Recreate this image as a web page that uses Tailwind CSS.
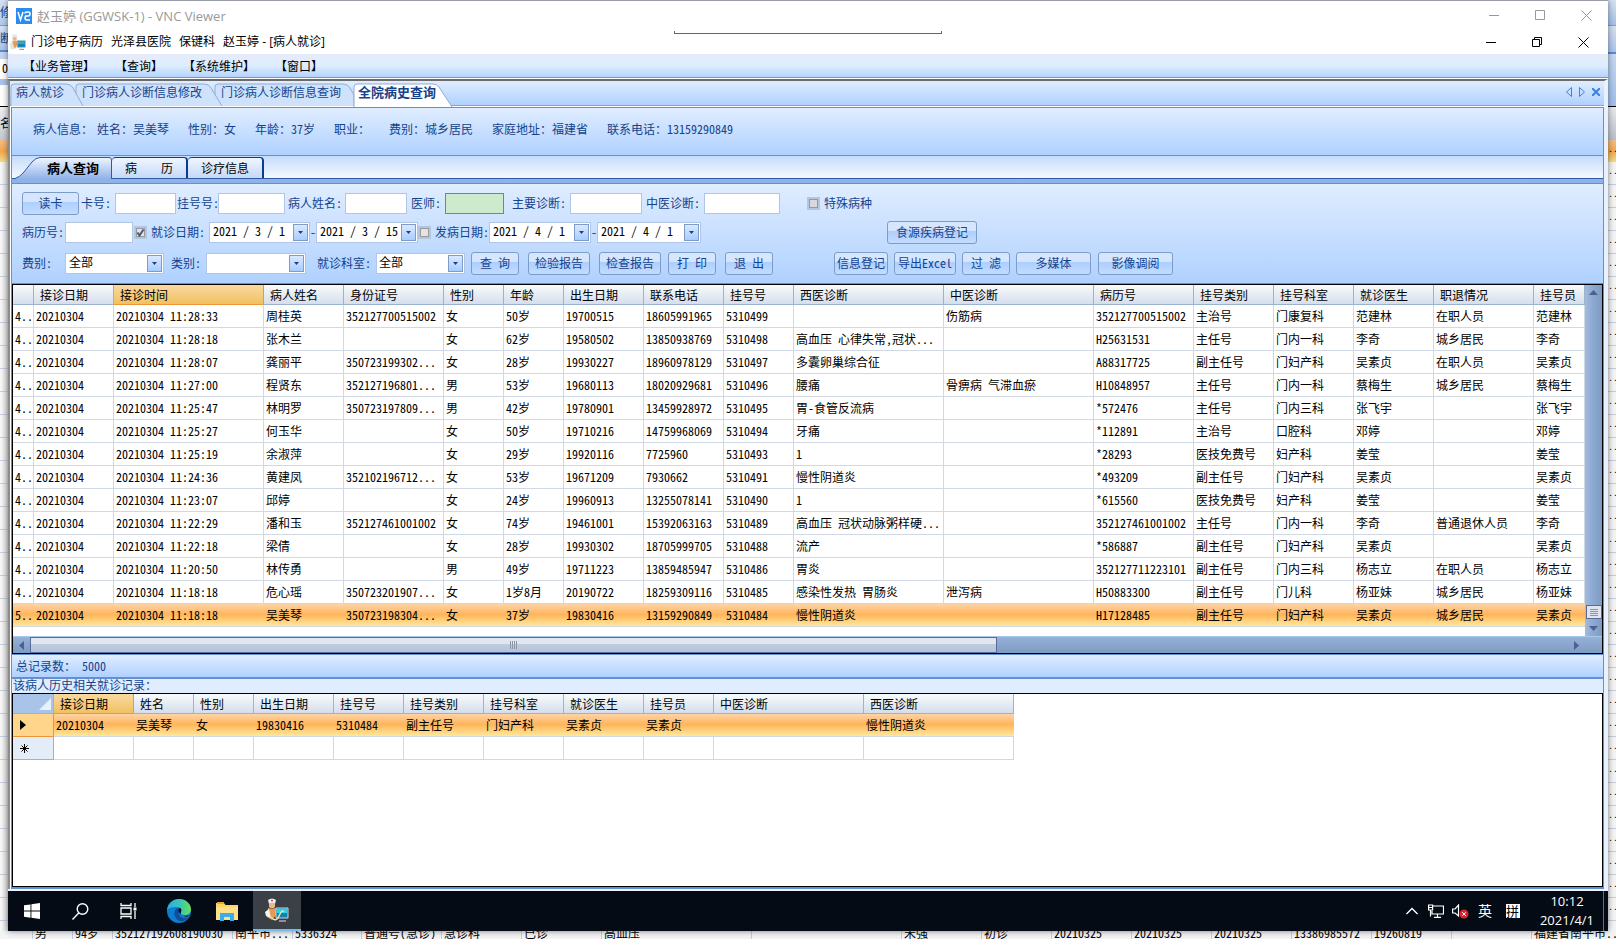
<!DOCTYPE html>
<html lang="zh-CN">
<head>
  <meta charset="UTF-8" />
  <meta name="viewport" content="width=device-width, initial-scale=1.0"/>
  <title>门诊电子病历</title>
  <script src="https://cdn.jsdelivr.net/npm/@tailwindcss/browser@4"></script>
</head>
<body class="h-screen flex flex-col overflow-hidden bg-[#f4f4f4] text-[12px] leading-4 text-black font-[family-name:'Noto_Sans_Mono_CJK_SC','Noto_Sans_CJK_SC',monospace]">

  <div class="flex grow min-h-0">
    <!-- window behind, left edge -->
    <div id="edgeLeft" class="w-2 shrink-0 overflow-hidden flex flex-col whitespace-nowrap text-[#15428b]">
      <div class="h-[26px] shrink-0 bg-linear-to-b from-[#d6e3f5] to-[#b4cbea] border-b border-[#8a9db8] pt-1">修</div>
      <div class="h-[26px] shrink-0 bg-linear-to-b from-[#d6e3f5] to-[#a9c4ea] border-b-2 border-[#5a8bcc] pt-1">断</div>
      <div class="h-[7px] shrink-0 bg-[#c3d6f0]"></div>
      <div class="h-5 shrink-0 bg-white text-black text-right pt-px">0</div>
      <div class="h-[6px] shrink-0 bg-[#a9c4ea]"></div>
      <div class="h-[21px] shrink-0 bg-white"></div>
      <div class="h-[34px] shrink-0 bg-linear-to-b from-[#eef0f2] to-[#c3c9d3] border-t border-black text-black pt-2">名</div>
      <div class="h-[22px] shrink-0 bg-linear-to-b from-[#f4bf87] via-[#f2a74d] to-[#f2dd88]"></div>
    </div>

    <div class="grow min-w-0 flex flex-col bg-white border-t border-[#979ca8] shadow-[0_0_6px_rgba(0,0,0,0.5)] z-10 relative">
      <!-- viewer title bar -->
      <header class="flex items-center h-[29px] pl-2 pr-4 text-[13px] text-[#999] font-[family-name:'Open_Sans','Noto_Sans_CJK_SC',sans-serif]">
        <svg class="size-4 mr-[5px]" viewBox="0 0 16 16"><rect width="16" height="16" fill="#2b8cf0"/><path d="M2 4l2.500 8L7 4M9 5.500Q9 4 11 4h1.500Q14 4 14 6T12 8h-1Q9 8 9 10t2 2h3M9 8h4" fill="none" stroke="#fff" stroke-width="1.500"/></svg>
        <h1 class="grow">赵玉婷 (GGWSK-1) - VNC Viewer</h1>
        <div class="flex items-center gap-[35px]">
          <button aria-label="最小化"><svg class="size-[11px]" viewBox="0 0 11 11" stroke="#999"><path d="M0 5.500h10"/></svg></button>
          <button aria-label="最大化"><svg class="size-[11px]" viewBox="0 0 11 11" stroke="#999" fill="none"><path d="M.5.5h9v9h-9z"/></svg></button>
          <button aria-label="关闭"><svg class="size-[11px]" viewBox="0 0 11 11" stroke="#999"><path d="M.5.5l10 10M10.500.5l-10 10"/></svg></button>
        </div>
      </header>
      <!-- collapsed viewer toolbar -->
      <div class="absolute left-[666px] top-[30px] w-[268px] h-[3px] border border-t-0 border-[#666]"></div>

      <!-- application title bar -->
      <div class="flex items-center gap-2 h-6 pl-[2px] pr-[19px] font-[family-name:'Open_Sans','Noto_Sans_CJK_SC',sans-serif]">
        <svg class="size-4 -mr-[3px]" viewBox="0 0 24 24"><path d="M3 2Q7-1 11 2L10 6H4z" fill="#e3e6ee"/><path d="M4 5h6v4Q7 12 4 9z" fill="#e8b88a"/><path d="M3 10l4 1 4-1 1 6-5 6-5-3z" fill="#e59a4c"/><path d="M0 14l4-3 2 9 4 3H1z" fill="#dfe4ea"/><path d="M11 10h12v10H11z" fill="#1380b8" stroke="#9fb8c8"/><path d="M12 11h10v4H12z" fill="#2fb0b0"/><path d="M14 23h7" stroke="#889" stroke-width="1.500"/></svg>
        <span>门诊电子病历</span>
        <span>光泽县医院</span>
        <span>保键科</span>
        <span class="grow">赵玉婷 - [病人就诊]</span>
        <div class="flex items-center gap-[35px]">
          <button aria-label="最小化"><svg class="size-[11px]" viewBox="0 0 11 11" stroke="#000"><path d="M0 5.500h10"/></svg></button>
          <button aria-label="还原"><svg class="size-[11px]" viewBox="0 0 11 11" stroke="#000" fill="none"><path d="M.5 2.500h7v7h-7zM2.500 2.500v-2h7v7h-2"/></svg></button>
          <button aria-label="关闭"><svg class="size-[11px]" viewBox="0 0 11 11" stroke="#000"><path d="M.5.5l10 10M10.500.5l-10 10"/></svg></button>
        </div>
      </div>

      <!-- menu -->
      <nav class="flex items-center h-6 pl-[15px] pt-px gap-5 bg-linear-to-b from-[#e6ebfa] via-[#deedff] to-[#b4d4ff] border-b border-[#6f9bd0]">
        <button>【业务管理】</button>
        <button>【查询】</button>
        <button>【系统维护】</button>
        <button>【窗口】</button>
      </nav>

      <div class="grow flex flex-col mt-px border-t-2 border-l-2 border-t-[#6b6b6b] border-l-[#8c8c8c] border-r-4 border-r-[#e8f1ff]">
        <!-- document tabs -->
        <div class="flex h-[25px] pt-[2px] bg-linear-to-b from-[#e0edff] to-[#afd1ff] border-b border-[#8ba3c7] text-[#15428b]">
          <button class="relative z-40 w-[65px] text-left pl-[6px] pb-1">
            <svg class="absolute left-0 top-0 -z-10 overflow-visible" width="65" height="23"><path d="M1 23V4Q1 1 4 1H56Q61 1 63 5L73 23" fill="#cfe2fc" stroke="#93add3"/></svg>病人就诊</button>
          <button class="relative z-30 w-[139px] text-left pl-[7px] pb-1">
            <svg class="absolute left-0 top-0 -z-10 overflow-visible" width="139" height="23"><path d="M1 23V4Q1 1 4 1H129Q134 1 136 5L147 23" fill="#cfe2fc" stroke="#93add3"/></svg>门诊病人诊断信息修改</button>
          <button class="relative z-20 w-[139px] text-left pl-[7px] pb-1">
            <svg class="absolute left-0 top-0 -z-10 overflow-visible" width="139" height="23"><path d="M1 23V4Q1 1 4 1H129Q134 1 136 5L140 12V23" fill="#cfe2fc" stroke="#93add3"/></svg>门诊病人诊断信息查询</button>
          <button class="relative z-40 w-[100px] text-left text-[13px] pl-[5px] pb-1 font-bold">
            <svg class="absolute left-0 top-0 -z-10 overflow-visible" width="100" height="23"><path d="M1 24V4Q1 1 4 1H80Q84 1 86 4L99 24" fill="#fff" stroke="#93add3"/></svg>全院病史查询</button>
          <div class="ml-auto mr-1 flex items-center gap-[7px] pb-1">
            <button aria-label="上一个"><svg width="6" height="10" fill="none" stroke="#3b82e0"><path d="M5.500.5v9L.5 5z"/></svg></button>
            <button aria-label="下一个"><svg width="6" height="10" fill="none" stroke="#3b82e0"><path d="M.5.5v9L5.500 5z"/></svg></button>
            <button aria-label="关闭页"><svg width="8" height="8" stroke="#3b82e0" stroke-width="2"><path d="M0 0l8 8M8 0L0 8"/></svg></button>
          </div>
        </div>

        <div class="grow flex flex-col mt-px ml-px border-x border-[#6490cf]">
          <!-- patient banner -->
          <div class="flex items-center h-[49px] pl-[21px] pb-[5px] gap-[19px] whitespace-pre border-y border-[#6490cf] bg-linear-to-b from-[#e0edff] to-[#afd1ff] text-[#15428b]">
            <span class="-mr-[15px]">病人信息：</span>
            <span>姓名：吴美琴</span>
            <span>性别：女</span>
            <span>年龄：37岁</span>
            <span>职业：</span>
            <span>费别：城乡居民</span>
            <span>家庭地址：福建省</span>
            <span>联系电话：13159290849</span>
          </div>

          <!-- page tabs -->
          <div class="flex items-end h-[23px] bg-linear-to-b from-[#c4dbfa] to-[#f4f9ff] border-b border-[#2c5aa5]">
            <button class="relative z-10 w-[100px] h-[21px] pl-[35px] text-left text-[13px] font-bold">
              <svg class="absolute left-0 top-0 -z-10 overflow-visible" width="100" height="22">
                <defs><linearGradient id="g" x2="0" y2="1"><stop offset="0" stop-color="#f0f6ff"/><stop offset="1" stop-color="#8fb2e8"/></linearGradient></defs>
                <path d="M2 22Q8 20 12 15L20 5Q24 .5 28 .5H97Q99.500 .5 99.500 3V22" fill="url(#g)" stroke="#2c5aa5"/></svg>
              病人查询</button>
            <button class="w-[76px] h-[21px] rounded-t border-t border-r-2 border-[#0b3c95] bg-linear-to-b from-[#f0f6ff] to-[#c5d9f7]">病　　历</button>
            <button class="w-[76px] h-[21px] rounded-t border-t border-r-2 border-[#0b3c95] bg-linear-to-b from-[#f0f6ff] to-[#c5d9f7]">诊疗信息</button>
          </div>
          <div class="h-[5px] bg-[#8fb2e8] border-b border-[#6490cf]"></div>

          <!-- query form -->
          <form id="query" class="h-[100px] pt-[7px] pl-[10px] flex flex-col gap-[6px] border-b border-[#6490cf] bg-linear-to-b from-[#e0edff] to-[#afd1ff] text-[#15428b] whitespace-nowrap">
            <div class="flex items-center h-6">
              <button type="button" class="w-[57px] h-[23px] mr-[2px] rounded-[3px] border border-[#7d9cc9] bg-linear-to-b from-[#d6e6fd] from-40% via-[#adcfff] via-45% to-[#c4dcff]">读卡</button>
              <label for="card" class="w-[34px]">卡号:</label>
              <input id="card" class="w-[61px] h-[21px] border border-[#b0c6e4] bg-white px-1 mr-px">
              <label for="reg" class="w-[41px]">挂号号:</label>
              <input id="reg" class="w-[67px] h-[21px] border border-[#b0c6e4] bg-white px-1 mr-[3px]">
              <label for="pname" class="w-[57px]">病人姓名:</label>
              <input id="pname" class="w-[62px] h-[21px] border border-[#b0c6e4] bg-white px-1 mr-1">
              <label for="doctor" class="w-[34px]">医师:</label>
              <input id="doctor" class="w-[59px] h-[21px] border border-[#808080] bg-[#cdeacd] px-1 mr-2">
              <label for="diag" class="w-[58px]">主要诊断:</label>
              <input id="diag" class="w-[72px] h-[21px] border border-[#b0c6e4] bg-white px-1 mr-1">
              <label for="tcm" class="w-[58px]">中医诊断:</label>
              <input id="tcm" class="w-[76px] h-[21px] border border-[#b0c6e4] bg-white px-1 mr-[27px]">
              <input id="special" type="checkbox" class="appearance-none size-[13px] border-2 border-[#b0c6e4] bg-[#d8d8d8] outline outline-[#999] -outline-offset-3 mr-1">
              <label for="special">特殊病种</label>
            </div>

            <div class="flex items-center h-6 pb-[2px]">
              <label for="record" class="w-[43px]">病历号:</label>
              <input id="record" class="w-[68px] h-[21px] border border-[#b0c6e4] bg-white px-1 mr-px">
              <span class="relative flex mr-1">
                <input id="useVisit" type="checkbox" checked class="appearance-none size-[13px] border-2 border-[#b0c6e4] bg-[#e4e4e4] outline outline-[#999] -outline-offset-3">
                <svg class="absolute inset-0 pointer-events-none" width="13" height="13" fill="none" stroke="#44597a" stroke-width="2"><path d="M3.500 6.500l2 3 4-6"/></svg>
              </span>
              <label for="useVisit" class="w-[58px]">就诊日期:</label>
              <div class="flex w-[101px] h-[21px] border border-[#b0c6e4] bg-white text-black">
                <input aria-label="就诊开始日期" value="2021 / 3 / 1" class="w-[83px] pl-[3px] pb-[2px]">
                <button type="button" aria-label="选择日期" class="w-[15px] my-px border border-[#7d9cc9] bg-linear-to-b from-[#dbe9ff] to-[#a8ccff]"><svg class="mx-auto" width="5" height="3" fill="#15428b"><path d="M0 0h5L2.500 3z"/></svg></button>
              </div>
              <span class="w-[6px]">-</span>
              <div class="flex w-[102px] h-[21px] border border-[#b0c6e4] bg-white text-black">
                <input aria-label="就诊结束日期" value="2021 / 3 / 15" class="w-[84px] pl-[3px] pb-[2px]">
                <button type="button" aria-label="选择日期" class="w-[15px] my-px border border-[#7d9cc9] bg-linear-to-b from-[#dbe9ff] to-[#a8ccff]"><svg class="mx-auto" width="5" height="3" fill="#15428b"><path d="M0 0h5L2.500 3z"/></svg></button>
              </div>
              <input id="useOnset" type="checkbox" class="appearance-none size-[13px] border-2 border-[#b0c6e4] bg-[#e4e4e4] outline outline-[#999] -outline-offset-3 mr-1">
              <label for="useOnset" class="w-[54px]">发病日期:</label>
              <div class="flex w-[102px] h-[21px] border border-[#b0c6e4] bg-white text-black">
                <input aria-label="发病开始日期" value="2021 / 4 / 1" class="w-[84px] pl-[3px] pb-[2px]">
                <button type="button" aria-label="选择日期" class="w-[15px] my-px border border-[#7d9cc9] bg-linear-to-b from-[#dbe9ff] to-[#a8ccff]"><svg class="mx-auto" width="5" height="3" fill="#15428b"><path d="M0 0h5L2.500 3z"/></svg></button>
              </div>
              <span class="w-[6px]">-</span>
              <div class="flex w-[104px] h-[21px] border border-[#b0c6e4] bg-white text-black">
                <input aria-label="发病结束日期" value="2021 / 4 / 1" class="w-[86px] pl-[3px] pb-[2px]">
                <button type="button" aria-label="选择日期" class="w-[15px] my-px border border-[#7d9cc9] bg-linear-to-b from-[#dbe9ff] to-[#a8ccff]"><svg class="mx-auto" width="5" height="3" fill="#15428b"><path d="M0 0h5L2.500 3z"/></svg></button>
              </div>
              <button type="button" class="w-[90px] h-[23px] ml-[186px] rounded-[3px] border border-[#7d9cc9] bg-linear-to-b from-[#d6e6fd] from-40% via-[#adcfff] via-45% to-[#c4dcff]">食源疾病登记</button>
            </div>

            <div class="flex items-center h-6">
              <label for="fee" class="w-[43px]">费别:</label>
              <span class="relative flex w-[99px] h-[21px] mr-[7px] text-black">
                <select id="fee" class="appearance-none w-full border border-[#b0c6e4] bg-white pl-[3px] pb-[2px]"><option>全部</option></select>
                <span class="absolute right-[2px] top-[2px] w-[15px] h-[17px] grid place-items-center pointer-events-none border border-[#7d9cc9] bg-linear-to-b from-[#dbe9ff] to-[#a8ccff]"><svg width="5" height="3" fill="#15428b"><path d="M0 0h5L2.500 3z"/></svg></span>
              </span>
              <label for="kind" class="w-[35px]">类别:</label>
              <span class="relative flex w-[100px] h-[21px] mr-[11px] text-black">
                <select id="kind" class="appearance-none w-full border border-[#b0c6e4] bg-white pl-[3px] pb-[2px]"><option></option></select>
                <span class="absolute right-[2px] top-[2px] w-[15px] h-[17px] grid place-items-center pointer-events-none border border-[#7d9cc9] bg-linear-to-b from-[#dbe9ff] to-[#a8ccff]"><svg width="5" height="3" fill="#15428b"><path d="M0 0h5L2.500 3z"/></svg></span>
              </span>
              <label for="dept" class="w-[59px]">就诊科室:</label>
              <span class="relative flex w-[89px] h-[21px] mr-[6px] text-black">
                <select id="dept" class="appearance-none w-full border border-[#b0c6e4] bg-white pl-[2px] pb-[2px]"><option>全部</option></select>
                <span class="absolute right-[2px] top-[2px] w-[15px] h-[17px] grid place-items-center pointer-events-none border border-[#7d9cc9] bg-linear-to-b from-[#dbe9ff] to-[#a8ccff]"><svg width="5" height="3" fill="#15428b"><path d="M0 0h5L2.500 3z"/></svg></span>
              </span>
              <button type="button" class="w-12 h-[23px] mr-[9px] rounded-[3px] border border-[#7d9cc9] bg-linear-to-b from-[#d6e6fd] from-40% via-[#adcfff] via-45% to-[#c4dcff]">查 询</button>
              <button type="button" class="w-[62px] h-[23px] mr-[9px] rounded-[3px] border border-[#7d9cc9] bg-linear-to-b from-[#d6e6fd] from-40% via-[#adcfff] via-45% to-[#c4dcff]">检验报告</button>
              <button type="button" class="w-[62px] h-[23px] mr-[7px] rounded-[3px] border border-[#7d9cc9] bg-linear-to-b from-[#d6e6fd] from-40% via-[#adcfff] via-45% to-[#c4dcff]">检查报告</button>
              <button type="button" class="w-12 h-[23px] mr-[9px] rounded-[3px] border border-[#7d9cc9] bg-linear-to-b from-[#d6e6fd] from-40% via-[#adcfff] via-45% to-[#c4dcff]">打 印</button>
              <button type="button" class="w-12 h-[23px] mr-[61px] rounded-[3px] border border-[#7d9cc9] bg-linear-to-b from-[#d6e6fd] from-40% via-[#adcfff] via-45% to-[#c4dcff]">退 出</button>
              <button type="button" class="w-[54px] h-[23px] mr-[6px] rounded-[3px] border border-[#7d9cc9] bg-linear-to-b from-[#d6e6fd] from-40% via-[#adcfff] via-45% to-[#c4dcff]">信息登记</button>
              <button type="button" class="w-[62px] h-[23px] mr-[6px] rounded-[3px] border border-[#7d9cc9] bg-linear-to-b from-[#d6e6fd] from-40% via-[#adcfff] via-45% to-[#c4dcff]">导出Excel</button>
              <button type="button" class="w-12 h-[23px] mr-[6px] rounded-[3px] border border-[#7d9cc9] bg-linear-to-b from-[#d6e6fd] from-40% via-[#adcfff] via-45% to-[#c4dcff]">过 滤</button>
              <button type="button" class="w-[75px] h-[23px] mr-[7px] rounded-[3px] border border-[#7d9cc9] bg-linear-to-b from-[#d6e6fd] from-40% via-[#adcfff] via-45% to-[#c4dcff]">多媒体</button>
              <button type="button" class="w-[75px] h-[23px] rounded-[3px] border border-[#7d9cc9] bg-linear-to-b from-[#d6e6fd] from-40% via-[#adcfff] via-45% to-[#c4dcff]">影像调阅</button>
            </div>
          </form>

          <!-- visits grid -->
          <div class="border border-black bg-white">
            <div class="flex">
              <div class="grow min-w-0 overflow-hidden pb-[9px]">
                <table class="table-fixed w-full border-separate border-spacing-0 whitespace-nowrap">
                  <colgroup>
                    <col class="w-[21px]"><col class="w-[80px]"><col class="w-[150px]"><col class="w-[80px]"><col class="w-[100px]"><col class="w-[60px]"><col class="w-[60px]"><col class="w-[80px]"><col class="w-[80px]"><col class="w-[70px]"><col class="w-[150px]"><col class="w-[150px]"><col class="w-[100px]"><col class="w-[80px]"><col class="w-[80px]"><col class="w-[80px]"><col class="w-[100px]"><col>
                  </colgroup>
                  <thead id="visitHead"></thead>
                  <tbody id="visitBody"></tbody>
                </table>
              </div>
              <div class="w-[17px] shrink-0 flex flex-col items-center bg-linear-to-r from-[#a3bbdc] via-[#8ba8d1] to-[#7d9bc3] pt-[5px] pb-[5px]">
                <svg width="9" height="5" fill="#4d5f8c"><path d="M4.500 0L9 5H0z"/></svg>
                <div class="mt-auto mb-[7px] w-4 h-[14px] border border-[#5a6a9a] bg-[#dfe5ee] flex flex-col justify-center gap-px px-[3px]">
                  <i class="h-px bg-[#8c96a8]"></i><i class="h-px bg-[#8c96a8]"></i><i class="h-px bg-[#8c96a8]"></i><i class="h-px bg-[#8c96a8]"></i>
                </div>
                <svg width="9" height="5" fill="#4d5f8c"><path d="M4.500 5L9 0H0z"/></svg>
              </div>
            </div>
            <div class="flex items-center h-[17px] bg-linear-to-b from-[#97b1d8] to-[#7d9bc3] border-t border-[#a9c8ee] pr-[23px]">
              <svg class="mx-[6px]" width="5" height="9" fill="#4d5f8c"><path d="M0 4.500L5 0v9z"/></svg>
              <div class="w-[967px] h-4 flex justify-center items-center gap-px border border-[#5a6a9a] bg-linear-to-b from-[#e2e7ef] from-40% via-[#c0cddf] via-45% to-[#b3c3da]">
                <i class="w-px h-2 bg-[#8c96a8]"></i><i class="w-px h-2 bg-[#8c96a8]"></i><i class="w-px h-2 bg-[#8c96a8]"></i><i class="w-px h-2 bg-[#8c96a8]"></i>
              </div>
              <svg class="ml-auto" width="5" height="9" fill="#4d5f8c"><path d="M5 4.500L0 0v9z"/></svg>
            </div>
          </div>

          <div class="flex items-center gap-[6px] h-[25px] pl-1 pb-px border-t border-b-2 border-[#6490cf] bg-linear-to-b from-[#e0edff] to-[#afd1ff] text-[#15428b]"><span>总记录数：</span><span>5000</span></div>
          <h2 class="h-[14px] leading-3 pl-px bg-[#e0edff] text-[#15428b]">该病人历史相关就诊记录：</h2>

          <!-- history grid -->
          <div class="grow border border-black bg-white">
            <table class="table-fixed w-[1001px] border-separate border-spacing-0 whitespace-nowrap">
              <colgroup>
                <col class="w-[41px]"><col class="w-[80px]"><col class="w-[60px]"><col class="w-[60px]"><col class="w-[80px]"><col class="w-[70px]"><col class="w-[80px]"><col class="w-[80px]"><col class="w-[80px]"><col class="w-[70px]"><col class="w-[150px]"><col class="w-[150px]">
              </colgroup>
              <thead id="historyHead"></thead>
              <tbody id="historyBody"></tbody>
            </table>
          </div>
          <div class="h-[2px] bg-[#5f8fd6]"></div>
        </div>
      </div>
      <div class="h-[2px] bg-[#eef4ff]"></div>

      <!-- taskbar -->
      <footer class="flex items-center h-10 bg-[#050b14] text-white font-[family-name:'Open_Sans','Noto_Sans_CJK_SC',sans-serif]">
        <button aria-label="开始" class="w-12 h-10 grid place-items-center"><svg width="16" height="16" fill="#fff"><path d="M0 2.300L6.500 1.400v6.200H0zM7.400 1.300L16 0v7.600H7.400zM0 8.500h6.500v6.200L0 13.800zM7.400 8.500H16V16l-8.600-1.200z"/></svg></button>
        <button aria-label="搜索" class="w-12 h-10 grid place-items-center"><svg width="17" height="17" fill="none" stroke="#fff" stroke-width="1.400"><circle cx="10.500" cy="6" r="5.300"/><path d="M6.700 10L.5 16.500"/></svg></button>
        <button aria-label="任务视图" class="w-12 h-10 grid place-items-center"><svg width="17" height="16" fill="none" stroke="#fff" stroke-width="1.300"><path d="M1 0v2.500h10V0M1 16v-2.500h10V16M1 5h10v6H1zM15 0v4M15 8v8"/><path d="M13.500 4.500h3v3h-3z" fill="#fff" stroke="none"/></svg></button>
        <button aria-label="浏览器" class="w-12 h-10 ml-[3px] grid place-items-center"><svg width="24" height="24" viewBox="0 0 24 24">
          <defs><linearGradient id="e1" x1="0" x2="1"><stop offset="0" stop-color="#2aa9e8"/><stop offset=".6" stop-color="#3cc9b0"/><stop offset="1" stop-color="#6be04a"/></linearGradient></defs>
          <circle cx="12" cy="12" r="12" fill="#0c7fd2"/><path d="M0 11C1 4 6 0 12 0c7 0 12 5 12 10 0 4-3 6-6 6-4 0-5-2-4-3 1-2 0-5-4-5C5 8 1 9 0 11z" fill="url(#e1)"/><path d="M9 10c-3 3-2 9 3 12 4 1 8-1 10-4-4 2-9 1-10-3-.5-2 .5-3 .5-4 0-2-2-2-3.500-1z" fill="#0f4f9e"/><path d="M14 13c1-2 0-4-1.500-4-1 .5-1.500 3 0 5 2 3 6 4 10.500 2-2 2-4 2-6 1-3-1-4-2-3-4z" fill="#050b14"/></svg></button>
        <button aria-label="资源管理器" class="w-12 h-10 grid place-items-center"><svg width="22" height="19"><path d="M0 1h8l1.500 2H22v15H0z" fill="#ffd666"/><path d="M0 5h22v13H0z" fill="#ffe08a"/><path d="M1 1h7" stroke="#e9a82c" stroke-width="2"/><path d="M4 19v-8h14v8h-4v-4H8v4z" fill="#39aee8"/></svg></button>
        <button aria-label="门诊电子病历" class="w-12 h-10 grid place-items-center bg-[#3b4047] border-b-2 border-[#76b9ed] ml-[2px]"><svg width="24" height="24" viewBox="0 0 24 24"><path d="M3 2Q7-1 11 2L10 6H4z" fill="#eef0f5"/><circle cx="7" cy="2.500" r="1" fill="#e04040"/><path d="M4 5h6v4Q7 12 4 9z" fill="#e8b88a"/><path d="M3 10l4 1 4-1 1 6-5 6-5-3z" fill="#e59a4c"/><path d="M0 14l4-3 2 9-5-2z" fill="#f3f5f7"/><path d="M11 10h12v10H11z" fill="#1380b8" stroke="#b8dcec"/><path d="M12 11h10v4H12z" fill="#2fd0e0"/><path d="M6 19q5 6 8-1t5-4" fill="none" stroke="#f0e3a0" stroke-width="1.500"/><path d="M14 23h7" stroke="#aab" stroke-width="1.500"/></svg></button>

        <div class="ml-auto flex items-center text-[14px]">
          <button aria-label="显示隐藏的图标" class="mr-[10px]"><svg width="12" height="8" fill="none" stroke="#fff" stroke-width="1.400"><path d="M.5 7L6 1.500 11.500 7"/></svg></button>
          <svg class="mr-2" width="16" height="14" fill="none" stroke="#fff" stroke-width="1.200"><path d="M5 2h10.500v8H4V7M.6 1h4v5h-4zM2.500 6v6.500M9.500 10v3M6 13.400h7M1 3.500h3"/></svg>
          <svg class="mr-[9px]" width="17" height="15"><path d="M.6 5h2.500L6.500 1v11L3.100 9H.6z" fill="none" stroke="#fff" stroke-width="1.200"/><circle cx="12" cy="10" r="4.500" fill="#d9232e"/><path d="M10.200 8.200l3.600 3.600M13.800 8.200l-3.600 3.600" stroke="#fff"/></svg>
          <span class="mr-[14px]">英</span>
          <span class="bg-white text-black leading-[14px] w-[14px] h-[14px] text-[13px]">拼</span>
          <div class="w-[70px] ml-3 text-center text-[13px] leading-[19px]"><div>10:12</div><div>2021/4/1</div></div>
          <div class="w-px h-10 ml-px mr-1 bg-[#6a6f76]"></div>
        </div>
      </footer>
    </div>

    <!-- window behind, right edge -->
    <div id="edgeRight" class="w-2 shrink-0 overflow-hidden flex flex-col whitespace-nowrap">
      <div class="h-[26px] shrink-0 bg-linear-to-b from-[#d6e3f5] to-[#a5c0e6] border-b border-[#8a9db8]"></div>
      <div class="h-[28px] shrink-0 bg-linear-to-b from-[#d6e0f0] to-[#a9c4ea] border-b-2 border-[#5a8bcc]"></div>
      <div class="h-[52px] shrink-0 bg-linear-to-b from-[#c6d8f2] to-[#9fbfea]"></div>
      <div class="h-[34px] shrink-0 bg-linear-to-b from-[#e8eaec] to-[#b9bfca] border-t border-black"></div>
      <div class="h-[22px] shrink-0 bg-linear-to-b from-[#f4bf87] via-[#f2a74d] to-[#f2dd88] text-[10px]">..</div>
    </div>
  </div>

  <!-- window behind, bottom edge -->
  <div class="flex h-2 shrink-0 overflow-hidden leading-[4px] whitespace-nowrap divide-x divide-[#c3cddd]">
    <div class="w-[33px] shrink-0"></div><div class="w-10 shrink-0 pl-[2px]">男</div><div class="w-10 shrink-0 pl-[2px]">94岁</div><div class="w-[120px] shrink-0 pl-[2px]">352127192608190030</div><div class="w-[60px] shrink-0 pl-[2px]">南平市...</div><div class="w-[69px] shrink-0 pl-[2px]">5336324</div><div class="w-20 shrink-0 pl-[2px]">普通号(急诊)</div><div class="w-20 shrink-0 pl-[2px]">急诊科</div><div class="w-20 shrink-0 pl-[2px]">已诊</div><div class="w-[150px] shrink-0 pl-[2px]">高血压</div><div class="w-[150px] shrink-0"></div><div class="w-20 shrink-0 pl-[2px]">宋强</div><div class="w-[70px] shrink-0 pl-[2px]">初诊</div><div class="w-20 shrink-0 pl-[2px]">20210325</div><div class="w-20 shrink-0 pl-[2px]">20210325</div><div class="w-20 shrink-0 pl-[2px]">20210325</div><div class="w-20 shrink-0 pl-[2px]">13386985572</div><div class="w-20 shrink-0 pl-[2px]">19260819</div><div class="w-20 shrink-0"></div><div class="grow pl-[2px]">福建省南平市..</div>
  </div>

  <script>
    const visitCols = ['', '接诊日期', '接诊时间', '病人姓名', '身份证号', '性别', '年龄', '出生日期', '联系电话', '挂号号', '西医诊断', '中医诊断', '病历号', '挂号类别', '挂号科室', '就诊医生', '职退情况', '挂号员'];

    // time, name, id card, sex, age, birth, phone, reg no, diagnosis, tcm, record no, type, dept, doctor, status
    const visits = [
      ['11:28:33', '周桂英', '352127700515002', '女', '50岁', '19700515', '18605991965', '5310499', '', '伤筋病', '352127700515002', '主治号', '门康复科', '范建林', '在职人员'],
      ['11:28:18', '张木兰', '', '女', '62岁', '19580502', '13850938769', '5310498', '高血压 心律失常,冠状...', '', 'H25631531', '主任号', '门内一科', '李奇', '城乡居民'],
      ['11:28:07', '龚丽平', '350723199302...', '女', '28岁', '19930227', '18960978129', '5310497', '多囊卵巢综合征', '', 'A88317725', '副主任号', '门妇产科', '吴素贞', '在职人员'],
      ['11:27:00', '程贤东', '352127196801...', '男', '53岁', '19680113', '18020929681', '5310496', '腰痛', '骨痹病 气滞血瘀', 'H10848957', '主任号', '门内一科', '蔡梅生', '城乡居民'],
      ['11:25:47', '林明罗', '350723197809...', '男', '42岁', '19780901', '13459928972', '5310495', '胃-食管反流病', '', '*572476', '主任号', '门内三科', '张飞宇', ''],
      ['11:25:27', '何玉华', '', '女', '50岁', '19710216', '14759968069', '5310494', '牙痛', '', '*112891', '主治号', '口腔科', '邓婷', ''],
      ['11:25:19', '余淑萍', '', '女', '29岁', '19920116', '7725960', '5310493', '1', '', '*28293', '医技免费号', '妇产科', '姜莹', ''],
      ['11:24:36', '黄建凤', '352102196712...', '女', '53岁', '19671209', '7930662', '5310491', '慢性阴道炎', '', '*493209', '副主任号', '门妇产科', '吴素贞', ''],
      ['11:23:07', '邱婷', '', '女', '24岁', '19960913', '13255078141', '5310490', '1', '', '*615560', '医技免费号', '妇产科', '姜莹', ''],
      ['11:22:29', '潘和玉', '352127461001002', '女', '74岁', '19461001', '15392063163', '5310489', '高血压 冠状动脉粥样硬...', '', '352127461001002', '主任号', '门内一科', '李奇', '普通退休人员'],
      ['11:22:18', '梁倩', '', '女', '28岁', '19930302', '18705999705', '5310488', '流产', '', '*586887', '副主任号', '门妇产科', '吴素贞', ''],
      ['11:20:50', '林传勇', '', '男', '49岁', '19711223', '13859485947', '5310486', '胃炎', '', '352127711223101', '副主任号', '门内三科', '杨志立', '在职人员'],
      ['11:18:18', '危心瑶', '350723201907...', '女', '1岁8月', '20190722', '18259309116', '5310485', '感染性发热 胃肠炎', '泄泻病', 'H50883300', '副主任号', '门儿科', '杨亚妹', '城乡居民'],
      ['11:18:18', '吴美琴', '350723198304...', '女', '37岁', '19830416', '13159290849', '5310484', '慢性阴道炎', '', 'H17128485', '副主任号', '门妇产科', '吴素贞', '城乡居民']
    ];

    const historyCols = ['', '接诊日期', '姓名', '性别', '出生日期', '挂号号', '挂号类别', '挂号科室', '就诊医生', '挂号员', '中医诊断', '西医诊断'];
    const history = ['20210304', '吴美琴', '女', '19830416', '5310484', '副主任号', '门妇产科', '吴素贞', '吴素贞', '', '慢性阴道炎'];

    const th = 'h-5 p-0 pl-[6px] text-left font-normal border-r border-b border-[#9ab4cf] bg-linear-to-b from-[#f7fbfb] to-[#d6deec]';
    const thSorted = 'h-5 p-0 pl-[6px] text-left font-normal border-r border-b border-[#f29536] bg-linear-to-b from-[#f9d9a0] to-[#f1c15f]';
    const td = 'h-[23px] p-0 pl-[2px] border-r border-b border-[#d0d7e5]';
    const tdSelected = 'h-[23px] p-0 pl-[2px] border-b border-[#d0d7e5]';
    const selected = 'bg-linear-to-b from-[#fcd4a6] via-[#ffb55a] via-45% to-[#ffec9f]';

    function head(cols, sorted) {
      return '<tr>' + cols.map((c, i) => `<th class="${i === sorted ? thSorted : th}">${c}</th>`).join('') + '</tr>';
    }

    document.getElementById('visitHead').innerHTML = head(visitCols, 2);
    document.getElementById('visitBody').innerHTML = visits.map((v, r) => {
      const last = r === visits.length - 1;
      const cells = [last ? '5..' : '4..', '20210304', '20210304 ' + v[0], ...v.slice(1), v[13]];
      return `<tr class="${last ? selected : ''}">` + cells.map(c => `<td class="${last ? tdSelected : td}">${c}</td>`).join('') + '</tr>';
    }).join('');

    document.getElementById('historyHead').innerHTML = head(historyCols, 1);
    document.getElementById('historyBody').innerHTML =
      `<tr class="${selected}"><td class="h-[23px] p-0 pl-[7px] bg-[#ffd58c] border-r border-b border-[#f29536]"><svg width="6" height="10"><path d="M0 0l6 5-6 5z"/></svg></td>` +
      history.map(c => `<td class="${tdSelected}">${c}</td>`).join('') + '</tr>' +
      '<tr><td class="h-[23px] p-0 pl-[7px] bg-[#e4ecf7] border-r border-b border-[#9ab4cf]"><svg width="9" height="9" stroke="#000"><path d="M4.500 0v9M0 4.500h9M1.500 1.500l6 6M7.500 1.500l-6 6"/></svg></td>' +
      history.map(() => `<td class="${td}"></td>`).join('') + '</tr>';
    document.querySelector('#historyHead th').innerHTML = '<svg class="ml-auto mr-[2px]" width="12" height="12" fill="#e8f0fb"><path d="M12 0v12H0z"/></svg>';
    document.querySelector('#historyHead th').className = 'h-5 p-0 border-r border-b border-[#9ab4cf] bg-[#a9c4e9]';

    // grid lines of the window behind
    for (let i = 0; i < 34; i++) {
      document.getElementById('edgeLeft').insertAdjacentHTML('beforeend', '<div class="h-[23px] shrink-0 border-b border-[#c3cddd] bg-linear-to-r from-[#fafafa] to-[#dcdcdc]"></div>');
      document.getElementById('edgeRight').insertAdjacentHTML('beforeend', '<div class="h-[23px] shrink-0 border-b border-[#c3cddd] text-[10px]">..</div>');
    }
  </script>
</body>
</html>
